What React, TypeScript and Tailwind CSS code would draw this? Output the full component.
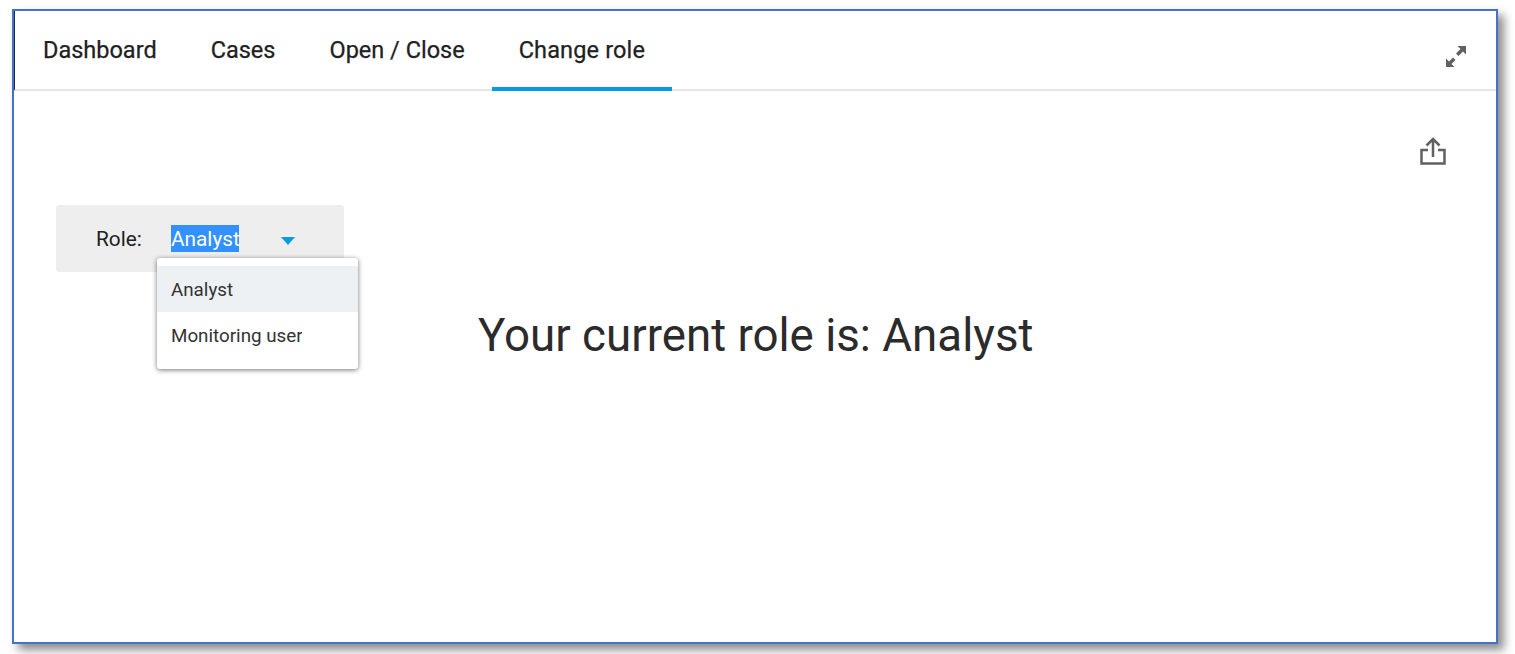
import React from "react";

const tabs = ["Dashboard", "Cases", "Open / Close", "Change role"];

export default function App() {
  return (
    <div className="w-[1515px] h-[654px] overflow-hidden bg-white pl-[12px] pt-[9px] font-['Roboto',sans-serif]">
      <div className="w-[1486px] h-[635px] border-2 border-[#4472c4] bg-white shadow-[6px_6px_9px_rgba(0,0,0,0.45)] flex flex-col">
        <div className="h-[80px] shrink-0 border-b-2 border-[#e5e5e5] flex items-stretch justify-between pl-[1px] border-l border-l-[#1f2a44]">
          <div className="flex h-[80px]">
            {tabs.map((t, i) => (
              <div
                key={t}
                className={
                  "h-[80px] pl-[27px] pr-[27px] pt-[24px] text-[23.500px] leading-[30px] font-normal [-webkit-text-stroke:0.25px_#212121] text-[#212121] border-b-4 whitespace-nowrap " +
                  (i === 3 ? "border-[#039be5] w-[180px] tracking-[0.15px]" : "border-transparent")
                }
              >
                {t}
              </div>
            ))}
          </div>
          <div className="pr-[28px] pt-[33px]">
            <svg width="24" height="24" viewBox="0 0 24 24" fill="#616161">
              <path d="M22 2h-8.500l3 3-4.500 4.500 2.500 2.500 4.500-4.500 3 3z" />
              <path d="M2 23h8.500l-3-3 4-4-2.500-2.500-4 4-3-3z" />
            </svg>
          </div>
        </div>
        <div className="flex-1 relative">
          <div className="flex justify-end pr-[49px] pt-[45px]">
            <svg width="28" height="30" viewBox="0 0 28 30" fill="none" stroke="#616161" strokeWidth="2.500">
              <path d="M14 21V3M7.500 9.500L14 3l6.500 6.500" />
              <path d="M9 14H2.500v13.500h23V14H19" />
            </svg>
          </div>
          <div className="ml-[42px] mt-[39px] w-[288px] h-[67px] bg-[#eeeeee] rounded-[3px] flex items-center text-[20.800px] text-[#212121] relative">
            <span className="ml-[40px] w-[75px] mt-[2px]">Role:</span>
            <span className="bg-[#3390ff] text-white h-[27px] leading-[29px] w-[68px] whitespace-nowrap overflow-hidden">Analyst</span>
            <span className="ml-[42px] mt-[5px] w-0 h-0 border-x-[7px] border-x-transparent border-t-[8px] border-t-[#039be5]" />
            <div className="absolute left-[101px] top-[53px] w-[201px] h-[111px] bg-white rounded-[3px] shadow-[0_1px_5px_rgba(0,0,0,0.55)] pt-[8px] text-[#333333] text-[18.800px]">
              <div className="h-[46px] leading-[48px] pl-[14px] bg-[#edf1f3]">Analyst</div>
              <div className="h-[47px] leading-[49px] pl-[14px] whitespace-nowrap">
                <span className="inline-block w-[131px] overflow-hidden align-top">Monitoring user</span>
              </div>
            </div>
          </div>
          <div className="absolute left-[464px] top-[215px] text-[45.700px] leading-[60px] text-[#2b2b2b] whitespace-nowrap">
            Your current role is: Analyst
          </div>
        </div>
      </div>
    </div>
  );
}
